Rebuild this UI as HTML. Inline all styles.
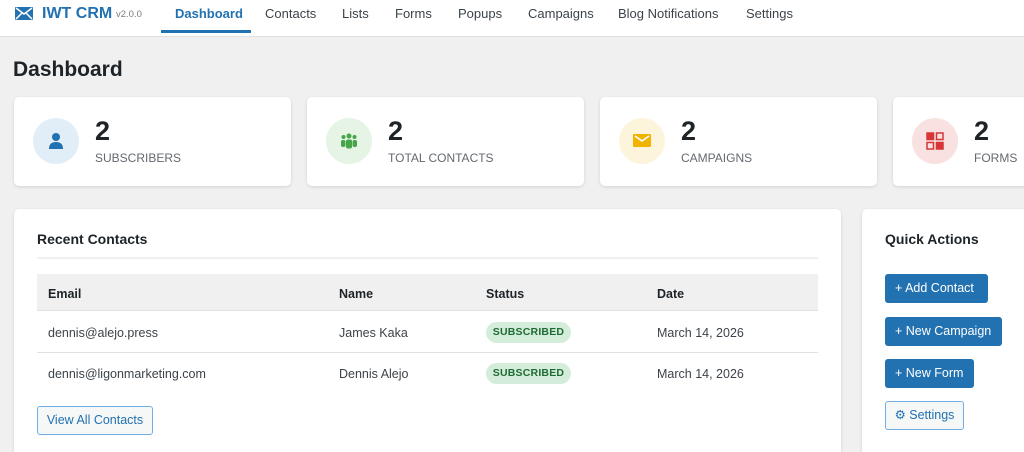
<!DOCTYPE html>
<html><head><meta charset="utf-8"><style>
*{box-sizing:border-box;margin:0;padding:0}
html,body{width:1024px;height:452px;overflow:hidden}
body{background:#f0f0f1;font-family:"Liberation Sans",sans-serif;color:#1d2327;position:relative}
.hdr{position:absolute;left:0;top:0;width:1024px;height:37px;background:#fff;border-bottom:1px solid #e0e0e0}
.logo{position:absolute;left:15px;top:5px;font-size:16px;font-weight:bold;color:#2271b1}
.ver{position:absolute;left:116px;top:9px;font-size:9.5px;color:#787c82}
.tab{position:absolute;top:6px;font-size:13px;color:#3c434a}
.tab.a{color:#2271b1;font-weight:bold}
.ul{position:absolute;left:161px;top:30px;width:90px;height:3px;background:#2271b1}
h1{position:absolute;left:13px;top:58px;font-size:21px;font-weight:bold;color:#1d2327}
.card{position:absolute;top:97px;width:277px;height:89px;background:#fff;border-radius:5px;box-shadow:0 1px 3px rgba(0,0,0,.12)}
.circ{position:absolute;left:19px;top:21px;width:46px;height:46px;border-radius:50%}
.num{position:absolute;left:81px;top:19px;font-size:27px;font-weight:bold;color:#1d2327}
.lbl{position:absolute;left:81px;top:54px;font-size:12px;color:#646970}
.panel{position:absolute;top:209px;background:#fff;border-radius:5px;box-shadow:0 1px 3px rgba(0,0,0,.12)}
.pt{position:absolute;font-size:14px;font-weight:bold}
.th{position:absolute;left:37px;top:274px;width:781px;height:37px;background:#f0f0f1;border-bottom:1px solid #e0e0e0}
.c{position:absolute;font-size:12.5px;color:#3c434a}
.h{font-weight:bold;color:#1d2327}
.badge{position:absolute;left:486px;width:85px;height:21px;border-radius:11px;background:#d4edda;color:#1e6b34;font-size:10.5px;font-weight:bold;text-align:center;line-height:21px;letter-spacing:.2px}
.btn{position:absolute;left:885px;height:29px;background:#2271b1;color:#fff;font-size:12.5px;line-height:29px;padding-left:10px;border-radius:3px}
.btn2{position:absolute;border:1px solid #72aee6;background:#f6f7f7;color:#2271b1;font-size:12.5px;border-radius:3px;line-height:27px}
</style></head><body>
<div class="hdr">
<svg style="position:absolute;left:15px;top:7px" width="18" height="13" viewBox="0 0 18 13"><rect width="18" height="13" rx="1" fill="#2271b1"/><path d="M1 1 L9 7 L17 1 M1 12 L7 6 M17 12 L11 6" stroke="#fff" stroke-width="1.5" fill="none"/></svg>
<div class="logo" style="left:42px">IWT CRM</div>
<div class="ver">v2.0.0</div>
<div class="tab a" style="left:175px">Dashboard</div>
<div class="tab" style="left:265px">Contacts</div>
<div class="tab" style="left:342px">Lists</div>
<div class="tab" style="left:395px">Forms</div>
<div class="tab" style="left:458px">Popups</div>
<div class="tab" style="left:528px">Campaigns</div>
<div class="tab" style="left:618px">Blog Notifications</div>
<div class="tab" style="left:746px">Settings</div>
<div class="ul"></div>
</div>
<h1>Dashboard</h1>
<div class="card" style="left:14px"><div class="circ" style="background:#e1eef8"><svg style="position:absolute;left:15px;top:14px" width="16" height="17" viewBox="0 0 16 17"><circle cx="8" cy="5" r="4" fill="#2271b1"/><path d="M1 17 Q1 10 8 10 Q15 10 15 17Z" fill="#2271b1"/></svg></div><div class="num">2</div><div class="lbl">SUBSCRIBERS</div></div>
<div class="card" style="left:307px"><div class="circ" style="background:#e6f4e6"><svg style="position:absolute;left:14px;top:14px" width="18" height="17" viewBox="0 0 18 17"><circle cx="9" cy="4" r="2.5" fill="#46a548"/><circle cx="3.5" cy="5" r="2" fill="#46a548"/><circle cx="14.5" cy="5" r="2" fill="#46a548"/><rect x="6" y="7.5" width="6" height="9" rx="2" fill="#46a548"/><rect x="1" y="8" width="4.5" height="7" rx="2" fill="#46a548"/><rect x="12.5" y="8" width="4.5" height="7" rx="2" fill="#46a548"/></svg></div><div class="num">2</div><div class="lbl">TOTAL CONTACTS</div></div>
<div class="card" style="left:600px"><div class="circ" style="background:#fdf4dc"><svg style="position:absolute;left:14px;top:16px" width="18" height="13" viewBox="0 0 18 13"><rect width="18" height="13" rx="1" fill="#f0b400"/><path d="M2 2 L9 7 L16 2" stroke="#fff" stroke-width="1.6" fill="none"/></svg></div><div class="num">2</div><div class="lbl">CAMPAIGNS</div></div>
<div class="card" style="left:893px"><div class="circ" style="background:#f9e1e1"><svg style="position:absolute;left:14px;top:14px" width="18" height="18" viewBox="0 0 18 18" fill="none" stroke="#d63638" stroke-width="1.5"><rect x="1" y="1" width="6.5" height="6.5" fill="#d63638"/><rect x="10.5" y="1" width="6.5" height="6.5"/><rect x="1" y="10.5" width="6.5" height="6.5"/><rect x="10.5" y="10.5" width="6.5" height="6.5" fill="#d63638"/></svg></div><div class="num">2</div><div class="lbl">FORMS</div></div>
<div class="panel" style="left:14px;width:827px;height:260px"></div>
<div class="panel" style="left:862px;width:180px;height:260px"></div>
<div class="pt" style="left:37px;top:231px">Recent Contacts</div>
<div style="position:absolute;left:37px;top:257px;width:781px;height:2px;background:#f0f0f1"></div>
<div class="th"></div>
<div class="c h" style="left:48px;top:287px">Email</div>
<div class="c h" style="left:339px;top:287px">Name</div>
<div class="c h" style="left:486px;top:287px">Status</div>
<div class="c h" style="left:657px;top:287px">Date</div>
<div class="c" style="left:48px;top:326px">dennis@alejo.press</div>
<div class="c" style="left:339px;top:326px">James Kaka</div>
<div class="badge" style="top:322px">SUBSCRIBED</div>
<div class="c" style="left:657px;top:326px">March 14, 2026</div>
<div style="position:absolute;left:37px;top:352px;width:781px;height:1px;background:#e0e0e0"></div>
<div class="c" style="left:48px;top:367px">dennis@ligonmarketing.com</div>
<div class="c" style="left:339px;top:367px">Dennis Alejo</div>
<div class="badge" style="top:363px">SUBSCRIBED</div>
<div class="c" style="left:657px;top:367px">March 14, 2026</div>
<div class="btn2" style="left:37px;top:406px;width:116px;height:29px;text-align:center">View All Contacts</div>
<div class="pt" style="left:885px;top:231px">Quick Actions</div>
<div class="btn" style="top:274px;width:103px">+ Add Contact</div>
<div class="btn" style="top:317px;width:117px">+ New Campaign</div>
<div class="btn" style="top:359px;width:89px">+ New Form</div>
<div class="btn2" style="left:885px;top:401px;width:79px;height:29px;text-align:center">⚙ Settings</div>
</body></html>
